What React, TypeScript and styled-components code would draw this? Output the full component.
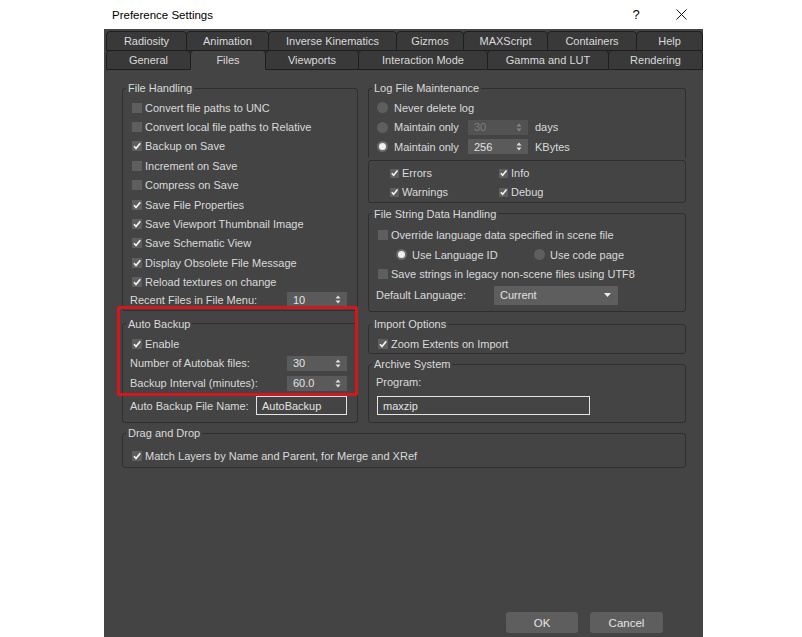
import styled, { createGlobalStyle } from "styled-components";

// === Theme ===
const theme = {
  body: "#444444",
  tab: "#393939",
  tabBorder: "#1e1e1e",
  groupBorder: "#2f2f2f",
  text: "#dadada",
  dim: "#7c7c7c",
  control: "#5e5e5e",
  field: "#5a5a5a",
  highlight: "#d3171c",
};

const GlobalStyle = createGlobalStyle`
  html, body {
    margin: 0;
    padding: 0;
    background: #ffffff;
  }
  body {
    font-family: "Liberation Sans", Arial, sans-serif;
  }
`;

// === Window chrome ===
const Page = styled.div`
  width: 802px;
  height: 637px;
  background: #ffffff;
  overflow: hidden;
`;

const Window = styled.div`
  margin-left: 104px;
  width: 599px;
  height: 637px;
  display: flex;
  flex-direction: column;
`;

const TitleBar = styled.div`
  height: 29px;
  flex-shrink: 0;
  display: flex;
  align-items: center;
  padding-left: 8px;
  background: #ffffff;
  color: #000000;
  font-size: 11.5px;
`;

const TitleText = styled.div`
  flex: 1;
`;

const TitleButtons = styled.div`
  display: flex;
  gap: 15px;
  margin-right: 7px;
`;

const TitleButton = styled.div`
  width: 30px;
  height: 22px;
  display: flex;
  align-items: center;
  justify-content: center;
  font-size: 13px;
  color: #000000;
`;

const Body = styled.div`
  flex: 1;
  display: flex;
  flex-direction: column;
  background: ${theme.body};
`;

// === Tabs ===
const TabStrip = styled.div`
  padding: 2px 0 0 2px;
`;

const TabRow = styled.div`
  display: flex;
  & + & {
    margin-top: -1px;
  }
`;

const Tab = styled.div<{ $w: number; $active?: boolean }>`
  position: relative;
  width: ${({ $w }) => $w + 1}px;
  height: 20px;
  margin-right: -1px;
  box-sizing: border-box;
  display: flex;
  align-items: center;
  justify-content: center;
  border: 1px solid ${theme.tabBorder};
  border-radius: 4px 4px 0 0;
  background: ${({ $active }) => ($active ? theme.body : theme.tab)};
  border-bottom-color: ${({ $active }) => ($active ? theme.body : theme.tabBorder)};
  z-index: ${({ $active }) => ($active ? 1 : 0)};
  color: ${theme.text};
  font-size: 11px;
  white-space: nowrap;
`;

// === Content layout ===
const Content = styled.div`
  padding: 12px 17px 0 18px;
`;

const Columns = styled.div`
  display: grid;
  grid-template-columns: 236px 318px;
  column-gap: 10px;
  align-items: start;
`;

const Column = styled.div`
  display: flex;
  flex-direction: column;
`;

const GroupBox = styled.fieldset<{ $mt?: number; $noBottom?: boolean }>`
  margin: ${({ $mt }) => $mt ?? 0}px 0 0 0;
  padding: 0;
  min-width: 0;
  border: 1px solid ${theme.groupBorder};
  border-radius: 3px;
  ${({ $noBottom }) =>
    $noBottom && "border-bottom-color: transparent; border-radius: 3px 3px 0 0;"}
`;

const Legend = styled.legend`
  margin-left: 3px;
  padding: 0 2px;
  font-size: 11px;
  line-height: 12px;
  color: ${theme.text};
`;

const GroupBody = styled.div<{ $pad: string }>`
  padding: ${({ $pad }) => $pad};
`;

const HighlightWrap = styled.div`
  position: relative;
`;

const Highlight = styled.div`
  position: absolute;
  left: -5px;
  right: 0;
  top: -5px;
  bottom: 27px;
  border: 3px solid ${theme.highlight};
  border-radius: 2px;
  pointer-events: none;
  z-index: 2;
`;

// === Rows ===
const Row = styled.div<{ $h: number; $indent?: number; $mt?: number }>`
  display: flex;
  align-items: center;
  height: ${({ $h }) => $h}px;
  margin-top: ${({ $mt }) => $mt ?? 0}px;
  padding-left: ${({ $indent }) => $indent ?? 0}px;
  color: ${theme.text};
  font-size: 11px;
  white-space: nowrap;
`;

const SpreadRow = styled(Row)`
  justify-content: space-between;
`;

const TwoCol = styled.div<{ $h: number; $indent: number; $col: number }>`
  display: grid;
  grid-template-columns: ${({ $col }) => $col}px auto;
  grid-auto-rows: ${({ $h }) => $h}px;
  padding-left: ${({ $indent }) => $indent}px;
  color: ${theme.text};
  font-size: 11px;
  white-space: nowrap;
`;

const Cell = styled.div<{ $gap: number }>`
  display: flex;
  align-items: center;
  gap: ${({ $gap }) => $gap}px;
`;

const FixedLabel = styled.span<{ $w: number }>`
  width: ${({ $w }) => $w}px;
  flex-shrink: 0;
`;

const Unit = styled.span`
  margin-left: 7px;
`;

// === Controls ===
const CheckBox = styled.span<{ $size?: number }>`
  width: ${({ $size }) => $size ?? 10}px;
  height: ${({ $size }) => $size ?? 10}px;
  flex-shrink: 0;
  display: inline-flex;
  align-items: center;
  justify-content: center;
  background: ${theme.control};
  margin-right: 3px;
`;

const RadioDot = styled.span<{ $on?: boolean }>`
  width: 11px;
  height: 11px;
  flex-shrink: 0;
  border-radius: 50%;
  box-sizing: border-box;
  background: ${({ $on }) => ($on ? "#f0f0f0" : theme.control)};
  border: ${({ $on }) => ($on ? "2px solid #6a6a6a" : "none")};
`;

const SpinBox = styled.div<{ $w: number; $disabled?: boolean }>`
  width: ${({ $w }) => $w}px;
  height: 15px;
  box-sizing: border-box;
  display: flex;
  align-items: center;
  justify-content: space-between;
  padding: 0 6px;
  background: ${({ $disabled }) => ($disabled ? "#525252" : theme.field)};
  color: ${({ $disabled }) => ($disabled ? theme.dim : "#e2e2e2")};
  font-size: 11px;
`;

const TextBox = styled.div<{ $w: number; $ml?: number }>`
  width: ${({ $w }) => $w}px;
  height: 19px;
  margin-left: ${({ $ml }) => $ml ?? 0}px;
  box-sizing: border-box;
  display: flex;
  align-items: center;
  padding-left: 5px;
  border: 1px solid #e4e4e4;
  background: ${theme.body};
  color: #e2e2e2;
  font-size: 11px;
`;

const DropDown = styled.div`
  width: 124px;
  height: 19px;
  box-sizing: border-box;
  display: flex;
  align-items: center;
  justify-content: space-between;
  padding: 0 7px 0 6px;
  background: ${theme.control};
  color: #e2e2e2;
  font-size: 11px;
`;

const Footer = styled.div`
  margin-top: auto;
  display: flex;
  justify-content: flex-end;
  gap: 12px;
  padding: 0 40px 4px 0;
`;

const Button = styled.div<{ $w: number }>`
  width: ${({ $w }) => $w}px;
  height: 21px;
  display: flex;
  align-items: center;
  justify-content: center;
  border-radius: 3px;
  background: ${theme.control};
  color: #e4e4e4;
  font-size: 11.5px;
`;

// === Small drawings ===
function Check({ on, size }: { on: boolean; size?: number }) {
  return (
    <CheckBox $size={size}>
      {on && (
        <svg width="10" height="10" viewBox="0 0 10 10">
          <path d="M2 5.2 L4 7.5 L8.3 2.3" stroke="#f4f4f4" strokeWidth="1.7" fill="none" />
        </svg>
      )}
    </CheckBox>
  );
}

function Arrows({ disabled }: { disabled?: boolean }) {
  const c = disabled ? "#868686" : "#e0e0e0";
  return (
    <svg width="6" height="9" viewBox="0 0 6 9">
      <polygon points="0.5,3.6 3,0.6 5.5,3.6" fill={c} />
      <polygon points="0.5,5.4 3,8.4 5.5,5.4" fill={c} />
    </svg>
  );
}

function Spinner({ value, w = 60, disabled }: { value: string; w?: number; disabled?: boolean }) {
  return (
    <SpinBox $w={w} $disabled={disabled}>
      <span>{value}</span>
      <Arrows disabled={disabled} />
    </SpinBox>
  );
}

function CheckRow({ label, on, h = 19.4, indent = 2 }: { label: string; on: boolean; h?: number; indent?: number }) {
  return (
    <Row $h={h} $indent={indent}>
      <Check on={on} />
      {label}
    </Row>
  );
}

const topTabs = [
  { label: "Radiosity", w: 80 },
  { label: "Animation", w: 82 },
  { label: "Inverse Kinematics", w: 128 },
  { label: "Gizmos", w: 67 },
  { label: "MAXScript", w: 84 },
  { label: "Containers", w: 89 },
  { label: "Help", w: 66 },
];

const bottomTabs = [
  { label: "General", w: 84 },
  { label: "Files", w: 75, active: true },
  { label: "Viewports", w: 93 },
  { label: "Interaction Mode", w: 129 },
  { label: "Gamma and LUT", w: 121 },
  { label: "Rendering", w: 94 },
];

const fileHandling = [
  { label: "Convert file paths to UNC", on: false },
  { label: "Convert local file paths to Relative", on: false },
  { label: "Backup on Save", on: true },
  { label: "Increment on Save", on: false },
  { label: "Compress on Save", on: false },
  { label: "Save File Properties", on: true },
  { label: "Save Viewport Thumbnail Image", on: true },
  { label: "Save Schematic View", on: true },
  { label: "Display Obsolete File Message", on: true },
  { label: "Reload textures on change", on: true },
];

// === Main Component ===
export default function App() {
  return (
    <Page>
      <GlobalStyle />
      <Window>
        <TitleBar>
          <TitleText>Preference Settings</TitleText>
          <TitleButtons>
            <TitleButton>?</TitleButton>
            <TitleButton>
              <svg width="11" height="11" viewBox="0 0 11 11">
                <path d="M0.5 0.5 L10.5 10.5 M10.5 0.5 L0.5 10.5" stroke="#111" strokeWidth="1" />
              </svg>
            </TitleButton>
          </TitleButtons>
        </TitleBar>

        <Body>
          <TabStrip>
            <TabRow>
              {topTabs.map((t) => (
                <Tab key={t.label} $w={t.w}>
                  {t.label}
                </Tab>
              ))}
            </TabRow>
            <TabRow>
              {bottomTabs.map((t) => (
                <Tab key={t.label} $w={t.w} $active={t.active}>
                  {t.label}
                </Tab>
              ))}
            </TabRow>
          </TabStrip>

          <Content>
            <Columns>
              {/* left column */}
              <Column>
                <GroupBox>
                  <Legend>File Handling</Legend>
                  <GroupBody $pad="4px 10px 2px 7px">
                    {fileHandling.map((item) => (
                      <CheckRow key={item.label} label={item.label} on={item.on} />
                    ))}
                    <SpreadRow $h={16}>
                      <span>Recent Files in File Menu:</span>
                      <Spinner value="10" />
                    </SpreadRow>
                  </GroupBody>
                </GroupBox>

                <HighlightWrap>
                  <GroupBox $mt={7}>
                    <Legend>Auto Backup</Legend>
                    <GroupBody $pad="4px 10px 7px 7px">
                      <CheckRow label="Enable" on h={19.5} />
                      <SpreadRow $h={20}>
                        <span>Number of Autobak files:</span>
                        <Spinner value="30" />
                      </SpreadRow>
                      <SpreadRow $h={20}>
                        <span>Backup Interval (minutes):</span>
                        <Spinner value="60.0" />
                      </SpreadRow>
                      <SpreadRow $h={19} $mt={3}>
                        <span>Auto Backup File Name:</span>
                        <TextBox $w={91}>AutoBackup</TextBox>
                      </SpreadRow>
                    </GroupBody>
                  </GroupBox>
                  <Highlight />
                </HighlightWrap>
              </Column>

              {/* right column */}
              <Column>
                <GroupBox $noBottom>
                  <Legend>Log File Maintenance</Legend>
                  <GroupBody $pad="4px 8px 0 8px">
                    <Row $h={19.5}>
                      <RadioDot />
                      <FixedLabel $w={80} style={{ marginLeft: 6 }}>Never delete log</FixedLabel>
                    </Row>
                    <Row $h={19.5}>
                      <RadioDot />
                      <FixedLabel $w={74} style={{ marginLeft: 6 }}>Maintain only</FixedLabel>
                      <Spinner value="30" disabled />
                      <Unit>days</Unit>
                    </Row>
                    <Row $h={19.5}>
                      <RadioDot $on />
                      <FixedLabel $w={74} style={{ marginLeft: 6 }}>Maintain only</FixedLabel>
                      <Spinner value="256" />
                      <Unit>KBytes</Unit>
                    </Row>
                  </GroupBody>
                </GroupBox>

                <GroupBox $mt={2}>
                  <TwoCol $h={19} $indent={21} $col={109} style={{ padding: "3px 0 0 21px" }}>
                    <Cell $gap={0}><Check on size={9} />Errors</Cell>
                    <Cell $gap={0}><Check on size={9} />Info</Cell>
                    <Cell $gap={0}><Check on size={9} />Warnings</Cell>
                    <Cell $gap={0}><Check on size={9} />Debug</Cell>
                  </TwoCol>
                </GroupBox>

                <GroupBox $mt={5}>
                  <Legend>File String Data Handling</Legend>
                  <GroupBody $pad="6px 8px 6px 7px">
                    <CheckRow label="Override language data specified in scene file" on={false} h={19.5} />
                    <TwoCol $h={19.5} $indent={20} $col={138}>
                      <Cell $gap={5}><RadioDot $on />Use Language ID</Cell>
                      <Cell $gap={5}><RadioDot />Use code page</Cell>
                    </TwoCol>
                    <CheckRow label="Save strings in legacy non-scene files using UTF8" on={false} h={19.5} />
                    <Row $h={20} $mt={1}>
                      <FixedLabel $w={118}>Default Language:</FixedLabel>
                      <DropDown>
                        <span>Current</span>
                        <svg width="7" height="4" viewBox="0 0 7 4">
                          <polygon points="0,0 7,0 3.5,4" fill="#ececec" />
                        </svg>
                      </DropDown>
                    </Row>
                  </GroupBody>
                </GroupBox>

                <GroupBox $mt={6}>
                  <Legend>Import Options</Legend>
                  <GroupBody $pad="4px 8px 0 7px">
                    <CheckRow label="Zoom Extents on Import" on h={19} />
                  </GroupBody>
                </GroupBox>

                <GroupBox $mt={4}>
                  <Legend>Archive System</Legend>
                  <GroupBody $pad="4px 8px 7px 7px">
                    <Row $h={15}>Program:</Row>
                    <TextBox $w={213} $ml={1} style={{ marginTop: 7 }}>maxzip</TextBox>
                  </GroupBody>
                </GroupBox>
              </Column>
            </Columns>

            <GroupBox $mt={4}>
              <Legend>Drag and Drop</Legend>
              <GroupBody $pad="7px 8px 1px 7px">
                <CheckRow label="Match Layers by Name and Parent, for Merge and XRef" on h={19.5} />
              </GroupBody>
            </GroupBox>
          </Content>

          <Footer>
            <Button $w={72}>OK</Button>
            <Button $w={73}>Cancel</Button>
          </Footer>
        </Body>
      </Window>
    </Page>
  );
}
